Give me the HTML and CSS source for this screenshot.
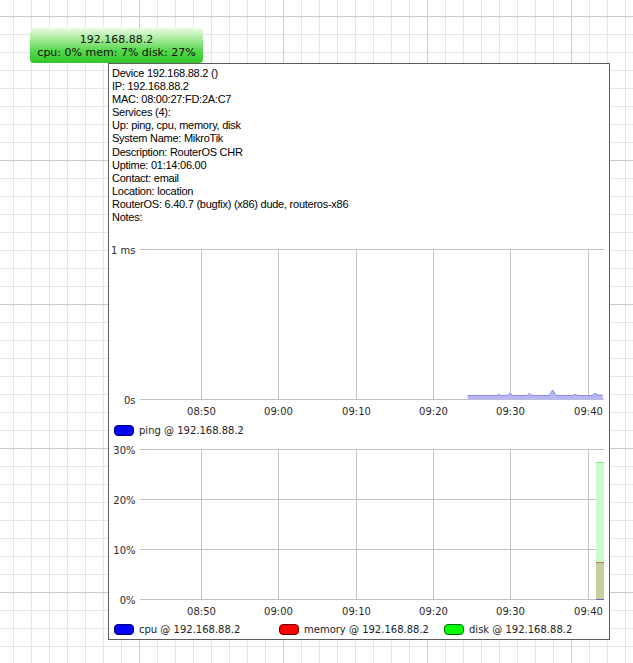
FILE: index.html
```html
<!DOCTYPE html>
<html>
<head>
<meta charset="utf-8">
<link rel="stylesheet" href="styles.css">
</head>
<body>
<div class="canvas">
  <div class="node">
    <div>192.168.88.2</div>
    <div>cpu: 0% mem: 7% disk: 27%</div>
  </div>

  <div class="tooltip">
    <div class="info">
      <div>Device 192.168.88.2 ()</div>
      <div>IP: 192.168.88.2</div>
      <div>MAC: 08:00:27:FD:2A:C7</div>
      <div>Services (4):</div>
      <div>Up: ping, cpu, memory, disk</div>
      <div>System Name: MikroTik</div>
      <div>Description: RouterOS CHR</div>
      <div>Uptime: 01:14:06.00</div>
      <div>Contact: email</div>
      <div>Location: location</div>
      <div>RouterOS: 6.40.7 (bugfix) (x86) dude, routeros-x86</div>
      <div>Notes:</div>
    </div>

    <svg class="chart chart-ping" width="500" height="199" viewBox="0 0 500 199">
      <g class="grid">
        <line x1="31" y1="28.5" x2="495" y2="28.5"/>
        <line x1="31" y1="178.5" x2="495" y2="178.5"/>
        <line x1="92.5" y1="28" x2="92.5" y2="179"/>
        <line x1="169.5" y1="28" x2="169.5" y2="179"/>
        <line x1="247.5" y1="28" x2="247.5" y2="179"/>
        <line x1="324.5" y1="28" x2="324.5" y2="179"/>
        <line x1="401.5" y1="28" x2="401.5" y2="179"/>
        <line x1="479.5" y1="28" x2="479.5" y2="179"/>
      </g>
      <path class="ping-area" d="M358.7,178.5 L358.7,174.5 L388,174.5 L390,173.5 L392,174.5 L398,174.5 L401,172.3 L404,174.5 L418,174.5 L420.3,172.3 L423,174.5 L440,174.5 L443.7,169 L447,174.5 L463,174.5 L466,173.5 L469,174.5 L483,174.5 L486,172.3 L489,174 L493.7,174 L493.7,178.5 Z"/>
      <path class="ping-line" d="M358.7,174.5 L388,174.5 L390,173.5 L392,174.5 L398,174.5 L401,172.3 L404,174.5 L418,174.5 L420.3,172.3 L423,174.5 L440,174.5 L443.7,169 L447,174.5 L463,174.5 L466,173.5 L469,174.5 L483,174.5 L486,172.3 L489,174 L493.7,174"/>
      <g class="ylabels">
        <text x="26.5" y="33">1 ms</text>
        <text x="26.5" y="183">0s</text>
      </g>
      <g class="xlabels">
        <text x="92.5" y="193.5">08:50</text>
        <text x="169.5" y="193.5">09:00</text>
        <text x="247.5" y="193.5">09:10</text>
        <text x="324.5" y="193.5">09:20</text>
        <text x="401.5" y="193.5">09:30</text>
        <text x="479.5" y="193.5">09:40</text>
      </g>
    </svg>

    <div class="legend">
      <div class="legend-item"><span class="swatch blue"></span>ping @ 192.168.88.2</div>
    </div>

    <svg class="chart chart-res" width="500" height="180" viewBox="0 0 500 180">
      <g class="grid">
        <line x1="31" y1="9.5" x2="495" y2="9.5"/>
        <line x1="31" y1="59.5" x2="495" y2="59.5"/>
        <line x1="31" y1="109.5" x2="495" y2="109.5"/>
        <line x1="31" y1="159.5" x2="495" y2="159.5"/>
        <line x1="92.5" y1="9" x2="92.5" y2="160"/>
        <line x1="169.5" y1="9" x2="169.5" y2="160"/>
        <line x1="247.5" y1="9" x2="247.5" y2="160"/>
        <line x1="324.5" y1="9" x2="324.5" y2="160"/>
        <line x1="401.5" y1="9" x2="401.5" y2="160"/>
        <line x1="479.5" y1="9" x2="479.5" y2="160"/>
      </g>
      <rect class="disk-fill" x="487" y="22" width="8" height="137.5"/>
      <line class="disk-top" x1="487" y1="22.5" x2="495" y2="22.5"/>
      <rect class="mem-fill" x="487" y="122" width="8" height="37.5"/>
      <line class="mem-top" x1="487" y1="122.5" x2="495" y2="122.5"/>
      <line class="cpu-top" x1="487" y1="159.5" x2="495" y2="159.5"/>
      <g class="ylabels">
        <text x="26.5" y="14">30%</text>
        <text x="26.5" y="64">20%</text>
        <text x="26.5" y="114">10%</text>
        <text x="26.5" y="164">0%</text>
      </g>
      <g class="xlabels">
        <text x="92.5" y="175">08:50</text>
        <text x="169.5" y="175">09:00</text>
        <text x="247.5" y="175">09:10</text>
        <text x="324.5" y="175">09:20</text>
        <text x="401.5" y="175">09:30</text>
        <text x="479.5" y="175">09:40</text>
      </g>
    </svg>

    <div class="legend legend-multi">
      <div class="legend-item"><span class="swatch blue"></span>cpu @ 192.168.88.2</div>
      <div class="legend-item"><span class="swatch red"></span>memory @ 192.168.88.2</div>
      <div class="legend-item"><span class="swatch green"></span>disk @ 192.168.88.2</div>
    </div>
  </div>
</div>
</body>
</html>
```

FILE: styles.css
```css
html, body {
  margin: 0;
  padding: 0;
}

body {
  width: 633px;
  height: 663px;
  overflow: hidden;
  background-color: #ffffff;
  background-image:
    linear-gradient(to right, #cbcbcb 1px, transparent 1px),
    linear-gradient(to bottom, #cbcbcb 1px, transparent 1px),
    linear-gradient(to right, #e6e6e6 1px, transparent 1px),
    linear-gradient(to bottom, #e6e6e6 1px, transparent 1px);
  background-size: 144px 100%, 100% 144px, 18px 100%, 100% 18px;
  background-position: 139px 0, 0 16px, 13px 0, 0 16px;
}

.canvas {
  position: relative;
  width: 633px;
  height: 663px;
}

.node {
  position: absolute;
  left: 30px;
  top: 28px;
  width: 173px;
  height: 35px;
  box-sizing: border-box;
  padding-top: 5px;
  border-radius: 4px;
  background: linear-gradient(to bottom, #eafbe4 0%, #a6ea9a 32%, #55d64b 66%, #2ec82a 100%);
  font-family: "DejaVu Sans", sans-serif;
  font-size: 11px;
  line-height: 13px;
  color: #111;
  text-align: center;
}

.tooltip {
  position: absolute;
  left: 108px;
  top: 63px;
  width: 500px;
  height: 575px;
  border: 1px solid #5e5e5e;
  background: #ffffff;
  display: flex;
  flex-direction: column;
}

.info {
  height: 157px;
  flex: none;
  box-sizing: border-box;
  padding: 3px 0 0 3px;
  font-family: "Liberation Sans", Arial, sans-serif;
  font-size: 11px;
  line-height: 13.1px;
  letter-spacing: -0.25px;
  color: #000;
}

.chart {
  display: block;
  flex: none;
}

.grid line {
  stroke: #c2c2c2;
  stroke-width: 1;
}

.ylabels text,
.xlabels text {
  font-family: "DejaVu Sans", sans-serif;
  font-size: 10px;
  fill: #2a2a2a;
}

.ylabels text {
  text-anchor: end;
}

.xlabels text {
  text-anchor: middle;
}

.ping-area {
  fill: #b6b6f2;
  stroke: none;
}

.ping-line {
  fill: none;
  stroke: #8a8ae6;
  stroke-width: 1;
}

.disk-fill {
  fill: #ccfccc;
}

.disk-top {
  stroke: #8ee68e;
  stroke-width: 1;
}

.mem-fill {
  fill: #c9cd9f;
}

.mem-top {
  stroke: #c47a55;
  stroke-width: 1;
}

.cpu-top {
  stroke: #6a6aa8;
  stroke-width: 1;
}

.legend {
  display: flex;
  align-items: center;
  height: 20px;
  padding-left: 5px;
  flex: none;
}

.legend-multi {
  height: 19px;
}

.legend-item {
  display: flex;
  align-items: center;
  width: 166px;
  font-family: "DejaVu Sans", sans-serif;
  font-size: 10px;
  color: #222;
  white-space: nowrap;
}

.swatch {
  display: inline-block;
  width: 18px;
  height: 9px;
  border: 1px solid #1a1a1a;
  border-radius: 4px;
  margin-right: 5px;
}

.swatch.blue { background: #0000ff; border-color: #00006a; }
.swatch.red { background: #ff0000; border-color: #6a0000; }
.swatch.green { background: #00ff00; border-color: #006a00; }
```
